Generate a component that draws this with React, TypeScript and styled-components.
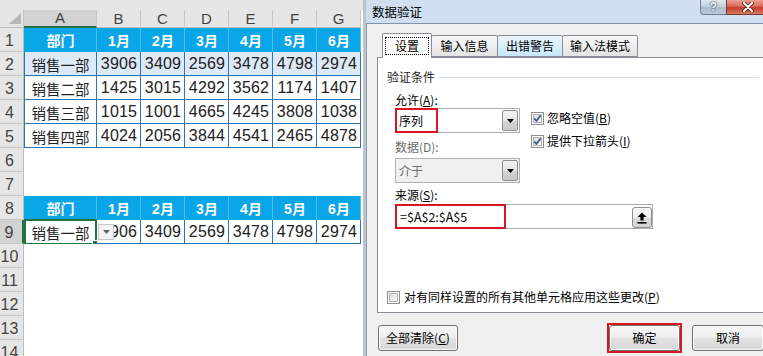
import React from 'react';
import styled, { createGlobalStyle } from 'styled-components';

const GlobalStyle = createGlobalStyle`
  html, body {
    margin: 0;
    padding: 0;
  }
  body {
    width: 763px;
    height: 356px;
    overflow: hidden;
    background: #fff;
    font-family: "Liberation Sans", "Noto Sans CJK SC", sans-serif;
  }
`;

const Screen = styled.div`
  display: flex;
  width: 763px;
  height: 356px;
  overflow: hidden;
`;

/* ---------- sheet ---------- */

const Sheet = styled.div`
  flex: none;
  width: 363px;
  display: grid;
  grid-template-columns: 24px 73px repeat(6, 44px) 2px;
  grid-template-rows: 10px 18px repeat(14, 24px);
  background: #fff;
`;

const TopBand = styled.div`
  grid-column: 1 / -1;
  background: #e6e6e6;
`;

const Corner = styled.div`
  background: #e6e6e6;
  border-right: 1px solid #c4c4c4;
  border-bottom: 1px solid #bdbdbd;
  display: flex;
  align-items: flex-end;
  justify-content: flex-end;
  padding: 0 2px 3px 0;
`;

const ColHead = styled.div<{ $active?: boolean }>`
  background: ${p => (p.$active ? '#d3d3d3' : '#e6e6e6')};
  border-right: 1px solid #c8c8c8;
  border-bottom: ${p => (p.$active ? '2px solid #217346' : '1px solid #bdbdbd')};
  display: flex;
  align-items: center;
  justify-content: center;
  font-size: 15px;
  line-height: 16px;
  color: #444;
`;

const RowHead = styled.div<{ $active?: boolean }>`
  background: ${p => (p.$active ? '#d3d3d3' : '#e6e6e6')};
  border-bottom: 1px solid #c6c6c6;
  border-right: ${p => (p.$active ? '2px solid #217346' : '1px solid #bdbdbd')};
  display: flex;
  align-items: flex-end;
  justify-content: center;
  padding: 0 4px 1px 0;
  font-family: "Liberation Sans Narrow", "Liberation Sans", sans-serif;
  font-size: 16px;
  line-height: 19px;
  color: #444;
`;

const Cell = styled.div<{
  $kind: 'head' | 'data' | 'blank';
  $fill?: boolean;
  $first?: boolean;
  $cjk?: boolean;
}>`
  position: relative;
  display: flex;
  align-items: center;
  justify-content: center;
  white-space: nowrap;
  color: ${p => (p.$kind === 'head' ? '#fff' : '#222')};
  font-weight: ${p => (p.$kind === 'head' ? 700 : 400)};
  font-family: ${p =>
    p.$kind === 'data' && !p.$cjk
      ? '"Liberation Sans Narrow", "Liberation Sans", sans-serif'
      : '"Liberation Sans", "Noto Sans CJK SC", sans-serif'};
  font-size: ${p => (p.$kind === 'head' ? '14px' : p.$cjk ? '14.5px' : '16px')};
  letter-spacing: ${p => (p.$kind === 'data' && !p.$cjk ? '0.2px' : '0')};
  background: ${p =>
    p.$kind === 'head' ? '#0aa6e8' : p.$fill ? '#dde9f6' : '#fff'};
  box-shadow: ${p =>
    p.$kind === 'data'
      ? `inset -1px -1px 0 #2e72b8${p.$first ? ', inset 1px 0 0 #2e72b8' : ''}`
      : p.$kind === 'head'
      ? 'inset -1px 0 0 #4cc0ef'
      : 'none'};
`;

const Selection = styled.div`
  position: absolute;
  left: 0;
  top: -1px;
  right: 0;
  bottom: -1px;
  border: 2px solid #217346;
  pointer-events: none;
`;

const FillHandle = styled.div`
  position: absolute;
  right: -4px;
  bottom: -4px;
  width: 5px;
  height: 5px;
  background: #217346;
  border: 1px solid #fff;
`;

const CellDrop = styled.div`
  position: absolute;
  left: 74px;
  top: 4px;
  width: 16px;
  height: 16px;
  box-sizing: border-box;
  background: #f4f4f4;
  border: 1px solid #c6c6c6;
  display: flex;
  align-items: center;
  justify-content: center;
  z-index: 2;
`;

const Gap = styled.div`
  background: #fff;
`;

/* ---------- dialog ---------- */

const Dialog = styled.div`
  flex: none;
  width: 408px;
  display: flex;
  flex-direction: column;
  border-left: 3px solid #bfc3c8;
  background: linear-gradient(180deg, #d0e0f1 0%, #c0d4ea 60%, #b7cde6 100%);
  font-family: "Noto Sans CJK SC", "Liberation Sans", sans-serif;
  font-size: 12px;
  line-height: 14px;
  color: #000;
`;

const TitleBar = styled.div`
  height: 23px;
  flex: none;
  display: flex;
  align-items: flex-start;
  padding: 0 5px 0 6px;
  border-bottom: 1px solid #7f93ab;
`;

const TitleText = styled.div`
  flex: 1;
  font-size: 12.5px;
  line-height: 23px;
`;

const CaptionButtons = styled.div`
  display: flex;
  height: 15px;
`;

const CaptionButton = styled.div<{ $close?: boolean }>`
  width: ${p => (p.$close ? '43px' : '27px')};
  height: 15px;
  box-sizing: border-box;
  border: 1px solid ${p => (p.$close ? '#7a3a32' : '#6f8094')};
  border-top: none;
  border-radius: ${p => (p.$close ? '0 0 4px 0' : '0 0 0 4px')};
  margin-left: ${p => (p.$close ? '-1px' : '0')};
  background: ${p =>
    p.$close
      ? 'linear-gradient(180deg, #e8a193 0%, #d66b5b 45%, #c4402d 55%, #d47a5f 100%)'
      : 'linear-gradient(180deg, #dfe7f0 0%, #c3cfdc 45%, #aebdcd 55%, #bccbdc 100%)'};
  display: flex;
  align-items: center;
  justify-content: center;
  color: #fff;
  font-family: "Liberation Sans", sans-serif;
  font-weight: 700;
  font-size: 12px;
  text-shadow: 0 0 2px #2a3a50, 0 0 1px #2a3a50;
`;

const Body = styled.div`
  flex: 1;
  background: #f0f0f0;
  border-left: 1px solid #8d9db0;
  padding: 9px 10px 0 10px;
  display: flex;
  flex-direction: column;
`;

const TabRow = styled.div`
  display: flex;
  align-items: flex-start;
  padding-left: 5px;
  height: 24px;
  position: relative;
  z-index: 1;
`;

const Tab = styled.div<{ $active?: boolean; $hover?: boolean; $w: number }>`
  width: ${p => p.$w}px;
  box-sizing: border-box;
  height: ${p => (p.$active ? 25 : 22)}px;
  margin-top: ${p => (p.$active ? 0 : 2)}px;
  margin-right: -1px;
  border: 1px solid #898c95;
  border-bottom: ${p => (p.$active ? 'none' : '1px solid #898c95')};
  border-radius: 2px 2px 0 0;
  background: ${p =>
    p.$active
      ? '#fff'
      : p.$hover
      ? 'linear-gradient(180deg, #e9f5fd 0%, #d8eefb 50%, #c7e7fa 100%)'
      : 'linear-gradient(180deg, #f7f7f7 0%, #efefef 50%, #e3e3e3 100%)'};
  display: flex;
  align-items: center;
  justify-content: center;
  position: relative;
  z-index: ${p => (p.$active ? 2 : 1)};
`;

const Focus = styled.span`
  display: flex;
  align-items: center;
  justify-content: center;
  width: 44px;
  height: 18px;
  box-sizing: border-box;
  border: 1px dotted #000;
`;

const Panel = styled.div`
  height: 256px;
  box-sizing: border-box;
  border: 1px solid #898c95;
  background: #fff;
  display: flex;
  flex-direction: column;
  padding: 12px 4px 8px 9px;
`;

const GroupHead = styled.div`
  display: flex;
  align-items: center;
  gap: 3px;
  color: #1f1f1f;
`;

const GroupLine = styled.div`
  flex: 1;
  height: 1px;
  background: #d5dfe5;
`;

const Fields = styled.div`
  display: flex;
  padding: 9px 0 0 8px;
`;

const Column = styled.div`
  display: flex;
  flex-direction: column;
`;

const Label = styled.div<{ $muted?: boolean; $top?: number; $indent?: number }>`
  margin-top: ${p => p.$top ?? 0}px;
  padding-left: ${p => p.$indent ?? 0}px;
  color: ${p => (p.$muted ? '#6d6d6d' : '#000')};
  line-height: 14px;
`;

const Combo = styled.div<{ $disabled?: boolean; $top?: number }>`
  position: relative;
  margin-top: ${p => p.$top ?? 0}px;
  width: 125px;
  height: 25px;
  box-sizing: border-box;
  border: 1px solid ${p => (p.$disabled ? '#adb2b5' : '#abadb3')};
  background: ${p => (p.$disabled ? '#f0f0f0' : '#fff')};
  color: ${p => (p.$disabled ? '#6d6d6d' : '#000')};
  display: flex;
  align-items: center;
  padding-left: 3px;
`;

const ComboButton = styled.div`
  position: absolute;
  right: 1px;
  top: 1px;
  bottom: 1px;
  width: 16px;
  box-sizing: border-box;
  border: 1px solid #8e8f8f;
  border-radius: 2px;
  background: linear-gradient(180deg, #f3f3f3 0%, #e5e5e5 50%, #d4d4d4 51%, #c9c9c9 100%);
  display: flex;
  align-items: center;
  justify-content: center;
`;

const Mark = styled.div<{ $w: number }>`
  position: absolute;
  left: -1px;
  top: -1px;
  bottom: -1px;
  width: ${p => p.$w}px;
  box-sizing: border-box;
  border: 2px solid #d9161f;
  pointer-events: none;
`;

const Checks = styled.div`
  display: flex;
  flex-direction: column;
  gap: 9px;
  margin: 18px 0 0 11px;
`;

const CheckRow = styled.div`
  display: flex;
  align-items: center;
  gap: 3px;
  height: 14px;
`;

const SourceInput = styled.div`
  position: relative;
  margin: 2px 0 0 8px;
  width: 258px;
  height: 25px;
  box-sizing: border-box;
  border: 1px solid #abadb3;
  background: #fff;
  display: flex;
  align-items: center;
  padding-left: 4px;
  font-size: 12.5px;
`;

const PickButton = styled.div`
  position: absolute;
  right: 0;
  top: 2px;
  width: 20px;
  height: 21px;
  box-sizing: border-box;
  border: 1px solid #8e8f8f;
  border-radius: 3px;
  background: linear-gradient(180deg, #fafafa 0%, #ececec 50%, #dcdcdc 51%, #d2d2d2 100%);
  display: flex;
  align-items: center;
  justify-content: center;
`;

const BottomCheck = styled(CheckRow)`
  margin-top: auto;
  gap: 4px;
`;

const ButtonRow = styled.div`
  display: flex;
  align-items: center;
  margin-top: 10px;
  padding-left: 1px;
`;

const Button = styled.div<{ $w: number }>`
  width: ${p => p.$w}px;
  height: 26px;
  box-sizing: border-box;
  border: 1px solid #707070;
  border-radius: 3px;
  background: linear-gradient(180deg, #f6f6f6 0%, #eeeeee 50%, #e1e1e1 51%, #d9d9d9 100%);
  box-shadow: inset 0 0 0 1px #fcfcfc;
  display: flex;
  align-items: center;
  justify-content: center;
`;

const DefaultMark = styled.div`
  margin-left: auto;
  margin-right: 10px;
  border: 2px solid #d9161f;
  display: flex;
`;

/* ---------- small drawings ---------- */

const CornerTriangle = () => (
  <svg width="12" height="11" viewBox="0 0 12 11">
    <path d="M12 0 L12 11 L0 11 Z" fill="#b8b8b8" />
  </svg>
);

const DownArrow = ({ color = '#000' }: { color?: string }) => (
  <svg width="7" height="4" viewBox="0 0 7 4">
    <path d="M0 0 L7 0 L3.5 4 Z" fill={color} />
  </svg>
);

const CloseGlyph = () => (
  <svg width="12" height="10" viewBox="0 0 12 10">
    <path d="M2 1 L10 9 M10 1 L2 9" stroke="#4b1a12" strokeWidth="3.6" strokeLinecap="round" />
    <path d="M2 1 L10 9 M10 1 L2 9" stroke="#fff" strokeWidth="2" strokeLinecap="round" />
  </svg>
);

const UploadGlyph = () => (
  <svg width="10" height="12" viewBox="0 0 10 12">
    <path d="M5 0.5 L9.5 5 L6.6 5 L6.6 8.5 L3.4 8.5 L3.4 5 L0.5 5 Z" fill="#000" />
    <rect x="0.5" y="10" width="9" height="1.6" fill="#000" />
  </svg>
);

const CheckBox = ({ checked }: { checked?: boolean }) => (
  <svg width="13" height="13" viewBox="0 0 13 13">
    <defs>
      <linearGradient id="cbg" x1="0" y1="0" x2="1" y2="1">
        <stop offset="0" stopColor="#dcdcdc" />
        <stop offset="1" stopColor="#fbfbfb" />
      </linearGradient>
    </defs>
    <rect x="0.5" y="0.5" width="12" height="12" fill="#fff" stroke="#8e8f8f" />
    <rect x="2.5" y="2.5" width="8" height="8" fill="url(#cbg)" stroke="#b3b3b3" />
    {checked && (
      <path d="M3.2 6.4 L5.4 8.8 L9.8 3.4" fill="none" stroke="#4a5f8c" strokeWidth="1.8" />
    )}
  </svg>
);

/* ---------- data ---------- */

const columns = ['A', 'B', 'C', 'D', 'E', 'F', 'G'];
const headers = ['部门', '1月', '2月', '3月', '4月', '5月', '6月'];
const sales = [
  ['销售一部', '3906', '3409', '2569', '3478', '4798', '2974'],
  ['销售二部', '1425', '3015', '4292', '3562', '1174', '1407'],
  ['销售三部', '1015', '1001', '4665', '4245', '3808', '1038'],
  ['销售四部', '4024', '2056', '3844', '4541', '2465', '4878'],
];

type RowSpec =
  | { kind: 'head' }
  | { kind: 'blank' }
  | { kind: 'data'; values: string[]; fill?: boolean; selected?: boolean };

const rows: RowSpec[] = [
  { kind: 'head' },
  { kind: 'data', values: sales[0], fill: true },
  { kind: 'data', values: sales[1] },
  { kind: 'data', values: sales[2] },
  { kind: 'data', values: sales[3] },
  { kind: 'blank' },
  { kind: 'blank' },
  { kind: 'head' },
  { kind: 'data', values: sales[0], selected: true },
  { kind: 'blank' },
  { kind: 'blank' },
  { kind: 'blank' },
  { kind: 'blank' },
  { kind: 'blank' },
];

const tabs = [
  { name: '设置', w: 50, active: true },
  { name: '输入信息', w: 67 },
  { name: '出错警告', w: 66, hover: true },
  { name: '输入法模式', w: 76 },
];

function SheetView() {
  return (
    <Sheet>
      <TopBand />
      <Corner>
        <CornerTriangle />
      </Corner>
      {columns.map(c => (
        <ColHead key={c} $active={c === 'A'}>
          {c}
        </ColHead>
      ))}
      <Gap />
      {rows.map((row, r) => (
        <React.Fragment key={r}>
          <RowHead $active={row.kind === 'data' && row.selected}>{r + 1}</RowHead>
          {columns.map((c, i) => {
            if (row.kind === 'head') {
              return (
                <Cell key={c} $kind="head">
                  {headers[i]}
                </Cell>
              );
            }
            if (row.kind === 'blank') {
              return <Cell key={c} $kind="blank" />;
            }
            const sel = row.selected && i === 0;
            return (
              <Cell key={c} $kind="data" $fill={row.fill} $first={i === 0} $cjk={i === 0}>
                {row.values[i]}
                {sel && (
                  <>
                    <Selection>
                      <FillHandle />
                    </Selection>
                    <CellDrop>
                      <DownArrow color="#666" />
                    </CellDrop>
                  </>
                )}
              </Cell>
            );
          })}
          <Gap />
        </React.Fragment>
      ))}
    </Sheet>
  );
}

function ValidationDialog() {
  return (
    <Dialog>
      <TitleBar>
        <TitleText>数据验证</TitleText>
        <CaptionButtons>
          <CaptionButton>?</CaptionButton>
          <CaptionButton $close>
            <CloseGlyph />
          </CaptionButton>
        </CaptionButtons>
      </TitleBar>
      <Body>
        <TabRow>
          {tabs.map(t => (
            <Tab key={t.name} $w={t.w} $active={t.active} $hover={t.hover}>
              {t.active ? <Focus>{t.name}</Focus> : t.name}
            </Tab>
          ))}
        </TabRow>
        <Panel>
          <GroupHead>
            验证条件
            <GroupLine />
          </GroupHead>
          <Fields>
            <Column>
              <Label>
                允许(<u>A</u>):
              </Label>
              <Combo $top={1}>
                序列
                <Mark $w={43} />
                <ComboButton>
                  <DownArrow />
                </ComboButton>
              </Combo>
              <Label $muted $top={7}>
                数据(D):
              </Label>
              <Combo $disabled $top={4}>
                介于
                <ComboButton>
                  <DownArrow />
                </ComboButton>
              </Combo>
            </Column>
            <Checks>
              <CheckRow>
                <CheckBox checked />
                <span>
                  忽略空值(<u>B</u>)
                </span>
              </CheckRow>
              <CheckRow>
                <CheckBox checked />
                <span>
                  提供下拉箭头(<u>I</u>)
                </span>
              </CheckRow>
            </Checks>
          </Fields>
          <Label $top={5} $indent={8}>
            来源(<u>S</u>):
          </Label>
          <SourceInput>
            =$A$2:$A$5
            <Mark $w={111} />
            <PickButton>
              <UploadGlyph />
            </PickButton>
          </SourceInput>
          <BottomCheck>
            <CheckBox />
            <span>
              对有同样设置的所有其他单元格应用这些更改(<u>P</u>)
            </span>
          </BottomCheck>
        </Panel>
        <ButtonRow>
          <Button $w={80}>
            <span>
              全部清除(<u>C</u>)
            </span>
          </Button>
          <DefaultMark>
            <Button $w={71}>确定</Button>
          </DefaultMark>
          <Button $w={72}>取消</Button>
        </ButtonRow>
      </Body>
    </Dialog>
  );
}

export default function App() {
  return (
    <>
      <GlobalStyle />
      <Screen>
        <SheetView />
        <ValidationDialog />
      </Screen>
    </>
  );
}
